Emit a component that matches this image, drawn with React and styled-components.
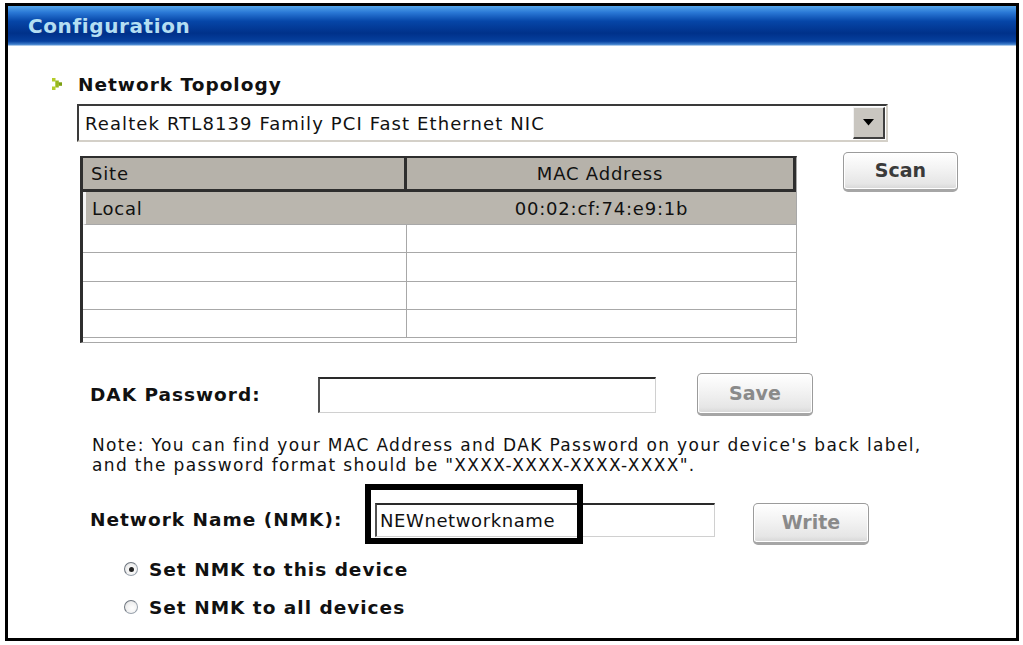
import React from 'react';
import styled, { createGlobalStyle } from 'styled-components';

const GlobalStyle = createGlobalStyle`
  html, body {
    margin: 0;
    padding: 0;
    background: #ffffff;
  }
  body {
    font-family: "DejaVu Sans", "Noto Sans", sans-serif;
    color: #111;
  }
`;

const Frame = styled.div`
  box-sizing: border-box;
  width: 1014px;
  height: 638px;
  margin: 3px 0 0 5px;
  border: 3px solid #000;
  background: #fff;
  display: flex;
  flex-direction: column;
`;

const TitleBar = styled.div`
  height: 40px;
  display: flex;
  align-items: center;
  padding-left: 20px;
  background: linear-gradient(
    to bottom,
    #55a6ea 0%,
    #2a78d6 16%,
    #0646a8 38%,
    #00318a 68%,
    #06409e 88%,
    #3f7fcc 96%,
    #dbe9f7 100%
  );
`;

const Title = styled.h1`
  margin: 0;
  font-size: 20px;
  font-weight: bold;
  color: #b4def2;
  letter-spacing: 0.6px;
`;

const Body = styled.div`
  padding: 27px 0 0 44px;
  display: flex;
  flex-direction: column;
`;

const Heading = styled.div`
  display: flex;
  align-items: center;
  gap: 16px;
  height: 22px;
  font-size: 18.5px;
  font-weight: bold;
  letter-spacing: 1px;
`;

const Dropdown = styled.div`
  box-sizing: border-box;
  margin: 9px 0 0 25px;
  width: 811px;
  height: 38px;
  display: flex;
  align-items: stretch;
  border-top: 2px solid #3a3a3a;
  border-left: 2px solid #3a3a3a;
  border-right: 2px solid #d4d0c8;
  border-bottom: 2px solid #d4d0c8;
  background: #fff;
`;

const DropdownText = styled.div`
  flex: 1;
  display: flex;
  align-items: center;
  padding-left: 6px;
  font-size: 18px;
  letter-spacing: 1.1px;
`;

const DropdownArrow = styled.div`
  width: 29px;
  margin: 1px;
  display: flex;
  align-items: center;
  justify-content: center;
  background: #c9c6c0;
  border-top: 1px solid #f2f2f2;
  border-left: 1px solid #f2f2f2;
  border-right: 2px solid #404040;
  border-bottom: 2px solid #404040;
`;

const TableRow = styled.div`
  margin-top: 10px;
  display: flex;
  align-items: flex-start;
`;

const Table = styled.div`
  box-sizing: border-box;
  margin: 4px 0 0 28px;
  width: 717px;
  height: 187px;
  border-left: 3px solid #2e2e2e;
  border-top: 2px solid #2e2e2e;
  border-right: 1px solid #a8a8a8;
  border-bottom: 1px solid #a8a8a8;
  display: grid;
  grid-template-columns: 324px 1fr;
  grid-template-rows: 34px 33px 28px 29px 28px 28px 1fr;
  font-size: 18px;
  letter-spacing: 0.8px;
`;

const HeadCell = styled.div`
  display: flex;
  align-items: center;
  justify-content: ${p => (p.$center ? 'center' : 'flex-start')};
  padding-left: ${p => (p.$center ? '0' : '8px')};
  background: #b6b2aa;
  border-bottom: 3px solid #2e2e2e;
  border-right: 3px solid #2e2e2e;
  box-sizing: border-box;
`;

const Cell = styled.div`
  box-sizing: border-box;
  display: flex;
  align-items: center;
  justify-content: ${p => (p.$center ? 'center' : 'flex-start')};
  padding-left: ${p => (p.$center ? '0' : '6px')};
  background: ${p => (p.$selected ? '#bab6ae' : '#fff')};
  border-bottom: 1px solid #a8a8a8;
  border-right: ${p => (p.$first ? '1px solid #a8a8a8' : 'none')};
  ${p => p.$selected && p.$first && 'border-left: 3px solid #f4f4f4;'}
  ${p => p.$selected && 'border-right: none;'}
`;

const Button = styled.button`
  box-sizing: border-box;
  margin-left: ${p => p.$gap}px;
  width: ${p => p.$w}px;
  height: ${p => p.$h}px;
  padding: 0 0 2px;
  font-family: "DejaVu Sans", sans-serif;
  font-size: 19px;
  font-weight: bold;
  color: ${p => (p.$dim ? '#8a8a8a' : '#3a3a3a')};
  border: 1px solid #9b9b9b;
  border-bottom: 3px solid #a6a6a6;
  border-radius: 5px;
  background: linear-gradient(to bottom, #ffffff 0%, #f4f4f4 40%, #e6e6e6 85%, #d6d6d6 100%);
  box-shadow: inset 0 0 0 1px #ffffff;
`;

const FieldRow = styled.div`
  margin-top: ${p => p.$top}px;
  display: flex;
  align-items: ${p => p.$align || 'center'};
`;

const Label = styled.div`
  box-sizing: border-box;
  margin-left: 38px;
  width: ${p => p.$w}px;
  font-size: 18.5px;
  font-weight: bold;
  letter-spacing: 1px;
  line-height: ${p => p.$lh || 22}px;
`;

const Input = styled.div`
  box-sizing: border-box;
  width: ${p => p.$w}px;
  height: ${p => p.$h}px;
  display: flex;
  align-items: center;
  padding-left: 3px;
  font-size: 18px;
  letter-spacing: 0.6px;
  background: #fff;
  border-top: 2px solid #2a2a2a;
  border-left: 2px solid #505050;
  border-right: 1px solid #d0d0d0;
  border-bottom: 1px solid #d0d0d0;
`;

const InputWrap = styled.div`
  position: relative;
`;

const Highlight = styled.div`
  position: absolute;
  left: -10px;
  top: -19px;
  width: 218px;
  height: 60px;
  box-sizing: border-box;
  border: 6px solid #000;
  pointer-events: none;
`;

const Note = styled.div`
  margin: 19px 0 0 40px;
  font-size: 17px;
  letter-spacing: 1.35px;
  line-height: 20px;
`;

const RadioGroup = styled.div`
  margin: 5px 0 0 72px;
  display: flex;
  flex-direction: column;
`;

const RadioRow = styled.label`
  display: flex;
  align-items: center;
  gap: 11px;
  height: 38px;
  font-size: 18.5px;
  font-weight: bold;
  letter-spacing: 1px;
`;

const RadioDot = styled.span`
  box-sizing: border-box;
  width: 14px;
  height: 14px;
  border-radius: 50%;
  border: 1.5px solid #9aa3ad;
  border-left-color: #6f7780;
  border-top-color: #6f7780;
  background: radial-gradient(circle at 60% 60%, #ffffff 0%, #f0f0f0 55%, #d6d6d6 100%);
  display: flex;
  align-items: center;
  justify-content: center;
  &::after {
    content: "";
    width: 5px;
    height: 5px;
    border-radius: 50%;
    background: ${p => (p.$on ? '#222' : 'transparent')};
  }
`;

function Bullet() {
  return (
    <svg width="10" height="12" viewBox="0 0 10 12">
      <rect x="0" y="0" width="3.5" height="3.5" fill="#b4cc2a" />
      <rect x="3.3" y="2.5" width="3.5" height="3.5" fill="#98b81c" />
      <rect x="6.5" y="4.3" width="3.5" height="3.5" fill="#7ca012" />
      <rect x="3.3" y="6" width="3.5" height="3.5" fill="#98b81c" />
      <rect x="0" y="8.5" width="3.5" height="3.5" fill="#b4cc2a" />
    </svg>
  );
}

function Arrow() {
  return (
    <svg width="11" height="7" viewBox="0 0 11 7">
      <path d="M0 0 H11 L5.5 6.5 Z" fill="#000" />
    </svg>
  );
}

const rows = [
  { site: 'Local', mac: '00:02:cf:74:e9:1b', selected: true },
  { site: '', mac: '' },
  { site: '', mac: '' },
  { site: '', mac: '' },
  { site: '', mac: '' },
];

export default function App() {
  return (
    <>
      <GlobalStyle />
      <Frame>
        <TitleBar>
          <Title>Configuration</Title>
        </TitleBar>
        <Body>
          <Heading>
            <Bullet />
            Network Topology
          </Heading>
          <Dropdown>
            <DropdownText>Realtek RTL8139 Family PCI Fast Ethernet NIC</DropdownText>
            <DropdownArrow>
              <Arrow />
            </DropdownArrow>
          </Dropdown>

          <TableRow>
            <Table>
              <HeadCell>Site</HeadCell>
              <HeadCell $center>MAC Address</HeadCell>
              {rows.map((r, i) => (
                <React.Fragment key={i}>
                  <Cell $first $selected={r.selected}>{r.site}</Cell>
                  <Cell $center $selected={r.selected}>{r.mac}</Cell>
                </React.Fragment>
              ))}
            </Table>
            <Button $gap={46} $w={115} $h={40}>Scan</Button>
          </TableRow>

          <FieldRow $top={30}>
            <Label $w={228}>DAK Password:</Label>
            <Input $w={338} $h={36} />
            <Button $gap={41} $w={116} $h={43} $dim>Save</Button>
          </FieldRow>

          <Note>
            Note: You can find your MAC Address and DAK Password on your device's back label,
            <br />
            and the password format should be "XXXX-XXXX-XXXX-XXXX".
          </Note>

          <FieldRow $top={28} $align="flex-start">
            <Label $w={285} $lh={34}>Network Name (NMK):</Label>
            <InputWrap>
              <Input $w={340} $h={34}>NEWnetworkname</Input>
              <Highlight />
            </InputWrap>
            <Button $gap={38} $w={116} $h={42} $dim>Write</Button>
          </FieldRow>

          <RadioGroup>
            <RadioRow>
              <RadioDot $on />
              Set NMK to this device
            </RadioRow>
            <RadioRow>
              <RadioDot />
              Set NMK to all devices
            </RadioRow>
          </RadioGroup>
        </Body>
      </Frame>
    </>
  );
}
